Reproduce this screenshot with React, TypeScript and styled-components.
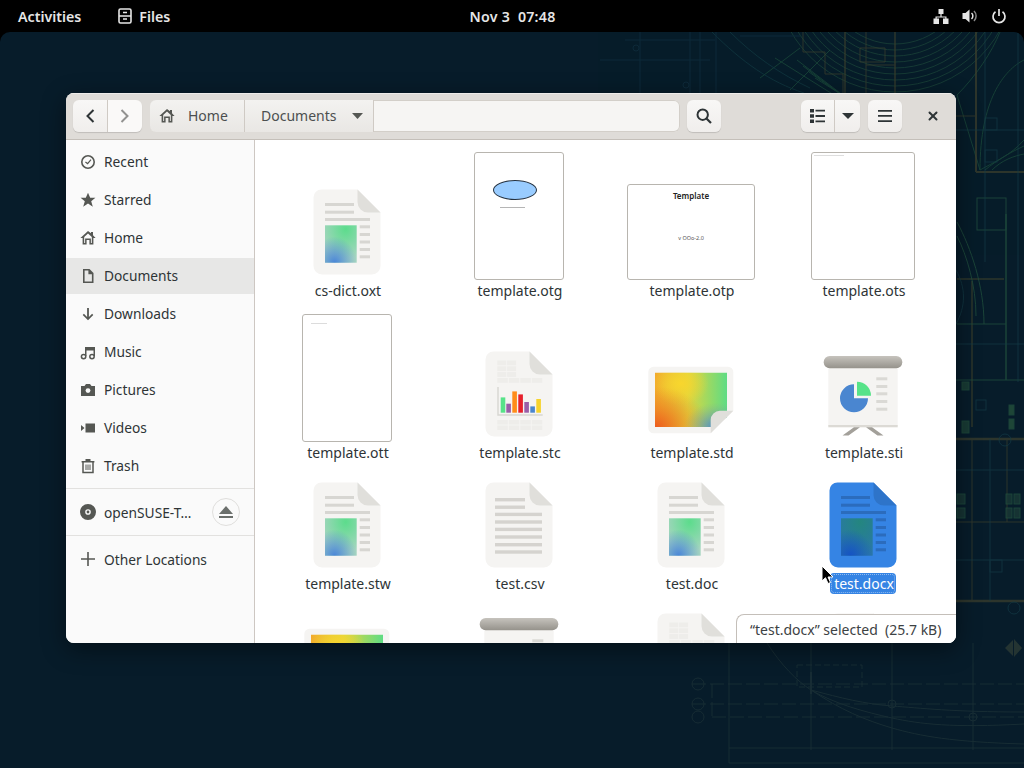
import React from 'react';
import styled, { createGlobalStyle } from 'styled-components';
import { X } from 'lucide-react';

const GlobalStyle = createGlobalStyle`
  html, body {
    margin: 0;
    padding: 0;
    background: #000;
    overflow: hidden;
  }
  * { box-sizing: border-box; }
`;

const FONT = `"Noto Sans", "Open Sans", sans-serif`;

const Screen = styled.div`
  width: 1024px;
  height: 768px;
  display: flex;
  flex-direction: column;
  background: #000;
  font-family: ${FONT};
  overflow: hidden;
`;

const TopBar = styled.div`
  height: 32px;
  flex: none;
  display: grid;
  grid-template-columns: 1fr auto 1fr;
  align-items: center;
  padding: 0 17px 0 18px;
  color: #e6e6e6;
  font-size: 14.2px;
  font-weight: 600;
`;

const BarLeft = styled.div`
  display: flex;
  align-items: center;
  gap: 37px;
`;

const AppName = styled.div`
  display: flex;
  align-items: center;
  gap: 7px;
`;

const Clock = styled.span`
  white-space: pre;
  letter-spacing: 0.25px;
`;

const BarRight = styled.div`
  display: flex;
  justify-content: flex-end;
  align-items: center;
  gap: 13px;
`;

const Desktop = styled.div`
  position: relative;
  flex: 1;
  background: #071c2a;
  border-radius: 10px 10px 0 0;
  overflow: hidden;
`;

const Blueprint = styled.svg`
  position: absolute;
  left: 0;
  top: 0;
  opacity: 0.68;
`;

const Defs = styled.svg`
  position: absolute;
`;

const Window = styled.div`
  position: absolute;
  left: 66px;
  top: 61px;
  width: 890px;
  height: 550px;
  border-radius: 8px;
  overflow: hidden;
  background: #fff;
  display: flex;
  flex-direction: column;
  box-shadow: 0 6px 24px rgba(0, 0, 0, 0.45);
`;

const HeaderBar = styled.div`
  height: 47px;
  flex: none;
  display: flex;
  align-items: center;
  padding: 0 6px 1px 7px;
  background: #dfdcd8;
  border-bottom: 1px solid #c4bfb9;
  border-top: 1px solid #eeecea;
`;

const ButtonGroup = styled.div`
  display: flex;
  height: 32px;
  border-radius: 6px;
  overflow: hidden;
  box-shadow: 0 1px 1px rgba(0, 0, 0, 0.14);
`;

const ToolButton = styled.div<{ $width: number; $divider?: boolean; $dim?: boolean }>`
  width: ${(p) => p.$width}px;
  height: 32px;
  display: flex;
  align-items: center;
  justify-content: center;
  background: ${(p) => (p.$dim ? '#faf9f8' : 'linear-gradient(#f8f7f6, #f0eeec)')};
  color: ${(p) => (p.$dim ? '#929290' : '#2e3436')};
  border-right: ${(p) => (p.$divider ? '1px solid #cfcac4' : 'none')};
`;

const PathBar = styled.div`
  margin-left: 8px;
  width: 530px;
  height: 32px;
  display: flex;
  border-radius: 6px;
  overflow: hidden;
  background: #f6f5f3;
  box-shadow: 0 0 0 1px #d3cfc9 inset;
`;

const Crumb = styled.div<{ $width: number; $inset: number }>`
  width: ${(p) => p.$width}px;
  display: flex;
  align-items: center;
  padding-left: ${(p) => p.$inset}px;
  gap: 13px;
  color: #4c4f50;
  font-size: 14px;
  background: linear-gradient(#f3f2f0, #e9e7e4);
  border-right: 1px solid #cfcac4;
`;

const CrumbLabel = styled.span<{ $grow?: boolean }>`
  padding-bottom: 1px;
  flex: ${(p) => (p.$grow ? 1 : 'none')};
`;

const Caret = styled.svg<{ $inset?: number }>`
  flex: none;
  margin-right: ${(p) => p.$inset ?? 0}px;
`;

const SearchSlot = styled.div`
  margin-left: 7px;
`;

const HeaderRight = styled.div`
  margin-left: auto;
  display: flex;
  align-items: center;
  gap: 8px;
`;

const CloseButton = styled.div`
  width: 34px;
  height: 32px;
  margin-left: 6px;
  display: flex;
  align-items: center;
  justify-content: center;
  color: #2e3436;
`;

const Body = styled.div`
  flex: 1;
  min-height: 0;
  display: flex;
`;

const Sidebar = styled.div`
  width: 189px;
  flex: none;
  padding-top: 4px;
  background: #fafafa;
  border-right: 1px solid #cdc7c2;
  color: #2e3436;
  font-size: 13.75px;
`;

const PlaceRow = styled.div<{ $active?: boolean }>`
  height: 36px;
  margin-bottom: 2px;
  display: flex;
  align-items: center;
  padding-left: 14px;
  gap: 8px;
  background: ${(p) => (p.$active ? '#e7e7e6' : 'transparent')};
`;

const PlaceLabel = styled.span`
  padding-bottom: 2px;
`;

const PlaceIcon = styled.svg`
  width: 16px;
  height: 16px;
  flex: none;
  color: #555753;
`;

const Separator = styled.div<{ $above: number; $below: number }>`
  height: 1px;
  background: #e2e1df;
  margin: ${(p) => p.$above}px 0 ${(p) => p.$below}px;
`;

const DeviceRow = styled(PlaceRow)`
  margin-bottom: 0;
  padding-bottom: 2px;
  position: relative;
`;

const EjectButton = styled.div`
  position: absolute;
  right: 14px;
  top: 3px;
  width: 28px;
  height: 28px;
  border-radius: 50%;
  border: 1px solid #dfdedc;
  display: flex;
  align-items: center;
  justify-content: center;
`;

const Content = styled.div`
  position: relative;
  flex: 1;
  overflow: hidden;
  background: #fff;
`;

const FileGrid = styled.div`
  display: grid;
  grid-template-columns: repeat(4, 172px);
  row-gap: 13px;
  padding: 12px 0 0 6px;
  align-items: end;
`;

const FileItem = styled.div`
  display: flex;
  flex-direction: column;
  align-items: center;
`;

const IconCell = styled.div<{ $height: number }>`
  height: ${(p) => p.$height}px;
  display: flex;
  align-items: flex-end;
  justify-content: center;
`;

const FileLabel = styled.div<{ $selected?: boolean }>`
  height: 21px;
  line-height: 22px;
  padding: 0 2px 0 4px;
  font-size: 14px;
  color: ${(p) => (p.$selected ? '#fff' : '#2e3436')};
  background: ${(p) => (p.$selected ? '#3584e4' : 'transparent')};
  border-radius: 4px;
  outline: ${(p) => (p.$selected ? '1px dotted rgba(255,255,255,0.45)' : 'none')};
  outline-offset: -2px;
`;

const Thumb = styled.div<{ $w: number; $h?: number }>`
  position: relative;
  width: ${(p) => p.$w}px;
  height: ${(p) => p.$h ?? 128}px;
  background: #fff;
  border: 1px solid #b8b5af;
  border-radius: 3px;
  overflow: hidden;
`;

const Oval = styled.div`
  position: absolute;
  left: 18px;
  top: 27px;
  width: 44px;
  height: 20px;
  border-radius: 50%;
  background: #99ccff;
  border: 1px solid #26323f;
`;

const Tiny = styled.div<{ $left: number; $top: number; $width: number; $shade: string }>`
  position: absolute;
  left: ${(p) => p.$left}px;
  top: ${(p) => p.$top}px;
  width: ${(p) => p.$width}px;
  height: 1px;
  background: ${(p) => p.$shade};
`;

const ThumbTitle = styled.div`
  position: absolute;
  left: 0;
  right: 0;
  top: 5px;
  text-align: center;
  font-size: 8px;
  line-height: 11px;
  font-weight: 600;
  color: #222;
`;

const ThumbVersion = styled.div`
  position: absolute;
  left: 0;
  right: 0;
  top: 50px;
  text-align: center;
  font-size: 5.5px;
  line-height: 7px;
  color: #555;
`;

const StatusPill = styled.div`
  position: absolute;
  right: 0;
  bottom: 0;
  width: 220px;
  height: 29px;
  padding-left: 13px;
  display: flex;
  align-items: center;
  background: #fff;
  border: 1px solid #c4bfb9;
  border-width: 1px 0 0 1px;
  border-radius: 8px 0 0 0;
  color: #3d4244;
  font-size: 14px;
  white-space: pre;
`;

const Pointer = styled.svg`
  position: absolute;
  left: 821px;
  top: 533px;
`;

// Sidebar glyphs, drawn to the 16px grid of the Adwaita symbolic set
const ICONS: Record<string, React.ReactNode> = {
  recent: (
    <>
      <circle cx="8" cy="8" r="6.2" fill="none" stroke="currentColor" strokeWidth="1.6" />
      <path d="M5.4 8 7.6 9.6 11 5.6" fill="none" stroke="currentColor" strokeWidth="1.2" />
    </>
  ),
  starred: <path d="M8 .8l2.2 5h5.2l-4.2 3.4 1.6 5.5L8 11.6l-4.8 3.1 1.6-5.5L.6 5.8h5.2z" fill="currentColor" />,
  home: <path d="M8 1 0.4 8h2.2v6.5h4V10h2.8v4.5h4V8h2.2L13 5.2V2h-2v1.3zM8 3.6l3.8 3.5v5.8h-.9V8.5H5.1v4.4h-.9V7.1z" fill="currentColor" fillRule="evenodd" />,
  documents: <path d="M3 1h6.5L13.5 5v10H3zM4.6 2.6v10.8h7.3V6.2H8.4V2.6z" fill="currentColor" fillRule="evenodd" />,
  downloads: <path d="M7.1 2h1.8v9l3.2-3.2 1.2 1.2L8 14.3 2.7 9l1.2-1.2L7.1 11z" fill="currentColor" />,
  music: (
    <>
      <path d="M5 3h10v9h-1.5V6.5h-7V12H5z" fill="currentColor" />
      <circle cx="3.6" cy="12.6" r="2.2" fill="none" stroke="currentColor" strokeWidth="1.5" />
      <circle cx="12" cy="12.6" r="2.2" fill="none" stroke="currentColor" strokeWidth="1.5" />
    </>
  ),
  pictures: (
    <>
      <path d="M1 4h3.5L6 2h4l1.5 2H15v10H1z" fill="currentColor" />
      <circle cx="8" cy="8.6" r="2.4" fill="#fafafa" />
    </>
  ),
  videos: <path d="M5.5 3.5h9.5v9H5.5zM1 5l3.5 3L1 11z" fill="currentColor" />,
  trash: (
    <>
      <path d="M1.6 3h12.8v1.5H1.6zM5.5 1h5v2h-5z" fill="currentColor" />
      <path d="M3 4v10.4h10V4" fill="none" stroke="currentColor" strokeWidth="1.5" />
      <path d="M6 6.5v5.5M8 6.5v5.5M10 6.5v5.5" stroke="currentColor" strokeWidth="1" />
    </>
  ),
  disc: (
    <>
      <path d="M8 0a8 8 0 1 0 0 16A8 8 0 0 0 8 0zm0 5.200a2.800 2.800 0 1 1 0 5.600 2.800 2.800 0 0 1 0-5.600z" fill="currentColor" fillRule="evenodd" />
      <circle cx="8" cy="8" r="1.4" fill="currentColor" />
    </>
  ),
  plus: <path d="M7.2 1h1.600v6.200H15v1.600H8.800V15H7.200V8.800H1V7.200h6.200z" fill="currentColor" />,
};

const Glyph = ({ name }: { name: string }) => (
  <PlaceIcon viewBox="0 0 16 16">{ICONS[name]}</PlaceIcon>
);

const SHEET = 'M22.500 5.500h36L81.500 28.500V82a8.500 8.500 0 0 1-8.500 8.500H23a8.500 8.500 0 0 1-8.500-8.500V13.500a8 8 0 0 1 8-8z';
const FOLD = 'M58.500 5.500 81.500 28.500H69a10.500 10.500 0 0 1-10.500-10.500z';

const Gradients = () => (
  <Defs width="0" height="0">
    <defs>
      <radialGradient id="tealA" cx="0.65" cy="0.1" r="0.8">
        <stop offset="0" stopColor="#5cdc8c" />
        <stop offset="1" stopColor="#a6d5c0" />
      </radialGradient>
      <radialGradient id="blueA" cx="0.3" cy="1" r="0.7">
        <stop offset="0" stopColor="#4a86d8" />
        <stop offset="1" stopColor="#4a86d8" stopOpacity="0" />
      </radialGradient>
      <radialGradient id="tealB" cx="0.6" cy="0.1" r="0.9">
        <stop offset="0" stopColor="#24867f" />
        <stop offset="1" stopColor="#2a77a8" />
      </radialGradient>
      <radialGradient id="blueB" cx="0.3" cy="1" r="0.7">
        <stop offset="0" stopColor="#1553c4" />
        <stop offset="1" stopColor="#1553c4" stopOpacity="0" />
      </radialGradient>
      <linearGradient id="roller" x1="0" y1="0" x2="0" y2="1">
        <stop offset="0" stopColor="#c6c3bd" />
        <stop offset="1" stopColor="#95928b" />
      </linearGradient>
      <linearGradient id="drawBase" x1="0" y1="0" x2="1" y2="0">
        <stop offset="0" stopColor="#f2a82c" />
        <stop offset="0.45" stopColor="#e0d63e" />
        <stop offset="1" stopColor="#5edc84" />
      </linearGradient>
      <radialGradient id="drawYellow" cx="0.35" cy="0.2" r="0.4">
        <stop offset="0" stopColor="#f8d62d" />
        <stop offset="1" stopColor="#f8d62d" stopOpacity="0" />
      </radialGradient>
      <radialGradient id="drawOrange" cx="0" cy="1" r="0.75">
        <stop offset="0" stopColor="#ed5b1e" />
        <stop offset="1" stopColor="#ed8a1e" stopOpacity="0" />
      </radialGradient>
      <radialGradient id="drawBlue" cx="0.85" cy="1" r="0.45">
        <stop offset="0" stopColor="#4a86d8" />
        <stop offset="1" stopColor="#8aa890" stopOpacity="0" />
      </radialGradient>
    </defs>
  </Defs>
);

const WriterIcon = ({ selected }: { selected?: boolean }) => {
  const sheet = selected ? '#3584e4' : '#f5f4f2';
  const fold = selected ? '#2e74c9' : '#e0dfdb';
  const line = selected ? '#2b6cbd' : '#d7d6d2';
  return (
    <svg width="96" height="96" viewBox="0 0 96 96">
      <path d={SHEET} fill={sheet} />
      <path d={FOLD} fill={fold} />
      <rect x="26" y="19" width="29" height="3" fill={line} />
      <rect x="26" y="26.700" width="29" height="3" fill={line} />
      <rect x="26" y="34" width="45" height="3" fill={line} />
      {[41.3, 49, 56.5, 64, 71.3].map((y) => (
        <rect key={y} x="60.700" y={y} width="10.300" height="3" fill={line} />
      ))}
      <rect x="26" y="41.300" width="31.700" height="37.400" fill={selected ? 'url(#tealB)' : 'url(#tealA)'} />
      <rect x="26" y="41.300" width="31.700" height="37.400" fill={selected ? 'url(#blueB)' : 'url(#blueA)'} />
    </svg>
  );
};

const TextIcon = () => (
  <svg width="96" height="96" viewBox="0 0 96 96">
    <path d={SHEET} fill="#f5f4f2" />
    <path d={FOLD} fill="#e0dfdb" />
    {[
      [21, 30],
      [28.5, 30],
      [35.7, 47],
      [43.3, 47],
      [50.7, 47],
      [58.3, 47],
      [66, 47],
      [73.3, 47],
    ].map(([y, w]) => (
      <rect key={y} x="24" y={y} width={w} height="3.400" fill="#d5d3cf" />
    ))}
  </svg>
);

const CalcIcon = () => {
  const bars: [number, number, string][] = [
    [29.7, 15.3, '#57e389'],
    [35.3, 9, '#9a5ea8'],
    [41.3, 21.3, '#ff8c1a'],
    [47.3, 18.3, '#e6202c'],
    [53.3, 10.7, '#9a5ea8'],
    [59.3, 6.3, '#4a86cf'],
    [65.3, 13.7, '#f6d32d'],
  ];
  const cells = [];
  for (let r = 0; r < 3; r++) {
    for (let c = 0; c < 2; c++) {
      cells.push(<rect key={`${r}-${c}`} x={26.3 + c * 9.800} y={14.500 + r * 5.800} width="9" height="4.800" fill="#eeedea" />);
    }
  }
  return (
    <svg width="96" height="96" viewBox="0 0 96 96">
      <path d={SHEET} fill="#f5f4f2" />
      <path d={FOLD} fill="#e0dfdb" />
      {cells}
      {[26.3, 37.800, 49.300, 60.800].map((x) => (
        <React.Fragment key={x}>
          <rect x={x} y="32" width="10.500" height="4.800" fill="#eeedea" />
          <rect x={x} y="74" width="10.500" height="4.500" fill="#eeedea" />
          <rect x={x} y="79.500" width="10.500" height="4.500" fill="#eeedea" />
        </React.Fragment>
      ))}
      <path d="M27 41v28h44.700" fill="none" stroke="#d7d6d2" strokeWidth="1.400" />
      {bars.map(([x, h, c]) => (
        <rect key={x} x={x} y={66.700 - h} width="4.600" height={h} fill={c} />
      ))}
    </svg>
  );
};

const DRAW_IMAGE = 'M12 26.700h72V71L68 81H12z';

const DrawIcon = () => (
  <svg width="96" height="96" viewBox="0 0 96 96">
    <path d="M5.300 26a5.300 5.300 0 0 1 5.300-5.300h74.400a5.300 5.300 0 0 1 5.300 5.300v38.700L67.700 87.300H10.600a5.300 5.300 0 0 1-5.300-5.300z" fill="#f5f4f2" />
    <path d={DRAW_IMAGE} fill="url(#drawBase)" />
    <path d={DRAW_IMAGE} fill="url(#drawYellow)" />
    <path d={DRAW_IMAGE} fill="url(#drawOrange)" />
    <path d={DRAW_IMAGE} fill="url(#drawBlue)" />
    <path d="M90.300 64.700 67.700 87.300V74a9.300 9.300 0 0 1 9.300-9.300z" fill="#e0dfdb" />
  </svg>
);

const ImpressIcon = () => (
  <svg width="96" height="96" viewBox="0 0 96 96">
    <path d="M13.300 21h69.400v59H13.300z" fill="#f5f4f2" />
    <rect x="13.300" y="79" width="69.400" height="2.300" fill="#dcdad5" />
    <rect x="8.700" y="10" width="78.600" height="12.300" rx="6" fill="url(#roller)" />
    <path d="M39 81.300h6L33.500 89.500H27.500zM51 81.300h6L68.500 89.500H62.500z" fill="#a3a09a" />
    <path d="M39 52.300V38.300A14 14 0 1 0 53 52.300z" fill="#4a86d0" />
    <path d="M42 49.700V35.700A14 14 0 0 1 56 49.700z" fill="#57e389" />
    {[31.3, 39, 46.3, 54, 61.7].map((y) => (
      <rect key={y} x="61.300" y={y} width="11" height="3" fill="#dad9d5" />
    ))}
  </svg>
);

type FileEntry = { name?: string; icon: React.ReactNode; selected?: boolean };

const ROWS: { height: number; files: FileEntry[] }[] = [
  {
    height: 128,
    files: [
      { name: 'cs-dict.oxt', icon: <WriterIcon /> },
      {
        name: 'template.otg',
        icon: (
          <Thumb $w={90}>
            <Oval />
            <Tiny $left={25} $top={54} $width={25} $shade="#b5b5b5" />
          </Thumb>
        ),
      },
      {
        name: 'template.otp',
        icon: (
          <Thumb $w={128} $h={96}>
            <ThumbTitle>Template</ThumbTitle>
            <ThumbVersion>v OOo-2.0</ThumbVersion>
          </Thumb>
        ),
      },
      {
        name: 'template.ots',
        icon: (
          <Thumb $w={104}>
            <Tiny $left={2} $top={2} $width={30} $shade="#dedede" />
          </Thumb>
        ),
      },
    ],
  },
  {
    height: 128,
    files: [
      {
        name: 'template.ott',
        icon: (
          <Thumb $w={90}>
            <Tiny $left={8} $top={8} $width={16} $shade="#dcdcdc" />
          </Thumb>
        ),
      },
      { name: 'template.stc', icon: <CalcIcon /> },
      { name: 'template.std', icon: <DrawIcon /> },
      { name: 'template.sti', icon: <ImpressIcon /> },
    ],
  },
  {
    height: 97,
    files: [
      { name: 'template.stw', icon: <WriterIcon /> },
      { name: 'test.csv', icon: <TextIcon /> },
      { name: 'test.doc', icon: <WriterIcon /> },
      { name: 'test.docx', icon: <WriterIcon selected />, selected: true },
    ],
  },
  // last row runs under the window edge, only the top of the icons shows
  {
    height: 97,
    files: [
      { icon: <DrawIcon /> },
      { icon: <ImpressIcon /> },
      { icon: <CalcIcon /> },
      { icon: <WriterIcon /> },
    ],
  },
];

const PLACES = [
  ['recent', 'Recent'],
  ['starred', 'Starred'],
  ['home', 'Home'],
  ['documents', 'Documents'],
  ['downloads', 'Downloads'],
  ['music', 'Music'],
  ['pictures', 'Pictures'],
  ['videos', 'Videos'],
  ['trash', 'Trash'],
];

const Wallpaper = () => (
  <Blueprint width="1024" height="736" viewBox="0 32 1024 736" fill="none">
    {/* concentric green arcs over the top right */}
    <g stroke="#2c6646" strokeWidth="1" opacity="0.6">
      {[52, 58, 64, 70, 76, 82, 88, 94, 100].map((r) => (
        <circle key={r} cx="895" cy="-28" r={r + 20} />
      ))}
    </g>
    <g stroke="#2f7a4c" strokeWidth="1" opacity="0.55">
      <path d="M775 58 842 100M797 60l43 33M803 66l36 27M809 72l30 21M815 78l24 15" />
      <path d="M790 90l40-40M760 78l40-30" />
      <path d="M1000 32c-8 20-24 44-43 63M1024 60c-20 10-44 40-44 110" />
      <path d="M957 95l23 75" />
      <path d="M980 170c14-8 30-14 44-30M985 170c12-10 26-18 39-24M992 170c10-10 22-14 32-16" />
    </g>
    <g stroke="#14434a" strokeWidth="1" opacity="0.8">
      <path d="M712 32c30 30 58 50 92 61M730 32c24 24 50 42 80 56" />
    </g>
    <g stroke="#534f2e" strokeWidth="1" opacity="0.75">
      <path d="M803 32v20h22v22h18v19" />
      <path d="M845 32v61M895 32v61" strokeWidth="1.500" />
      <path d="M866 32v61M866 65h29M860 48h25v14h-25z" />
      <path d="M976 32v140" strokeWidth="2" />
      <path d="M976 172h48" strokeWidth="2" />
      <path d="M957 279h47M972 281v146" strokeWidth="1.500" />
      <path d="M956 439h68" strokeWidth="2.500" />
      <path d="M972 439v162M1007 439v83M956 522h68" />
      <path d="M956 601h68" strokeWidth="2.500" />
      <path d="M956 116h20" />
    </g>
    <g stroke="#2c6646" strokeWidth="1" opacity="0.8">
      <path d="M1006 214v166" strokeWidth="1.500" />
      <path d="M957 222c14 26 27 64 27 102" />
      <path d="M957 236c10 20 19 50 19 80" />
      <path d="M956 380h68M957 324h49" />
      <rect x="977" y="198" width="29" height="32" />
      <rect x="962" y="382" width="7" height="8" fill="#28553f" />
      <rect x="962" y="421" width="7" height="12" fill="#28553f" />
      <rect x="1009" y="405" width="5" height="10" fill="#336a44" />
      <rect x="1009" y="419" width="5" height="10" fill="#336a44" />
      <rect x="957" y="494" width="8" height="10" fill="#24483c" />
      <rect x="957" y="508" width="8" height="10" fill="#24483c" />
      <rect x="1006" y="494" width="6" height="10" fill="#24483c" />
      <rect x="1014" y="494" width="6" height="10" fill="#24483c" />
      <rect x="1006" y="508" width="6" height="10" fill="#24483c" />
      <rect x="1014" y="508" width="6" height="10" fill="#24483c" />
    </g>
    <g stroke="#1a4a55" strokeWidth="1" opacity="0.7">
      <path d="M956 270c10 18 10 36 0 54" />
      <path d="M985 32v230M1018 32v350M956 130h68M956 344h68M956 470h68M956 560h68M990 439v162" />
      <rect x="985" y="118" width="12" height="12" />
      <rect x="985" y="150" width="12" height="12" />
      <rect x="990" y="560" width="12" height="12" />
      <rect x="976" y="400" width="10" height="10" />
      <circle cx="1005" cy="440" r="6" />
      <circle cx="1014" cy="608" r="6" />
    </g>
    <path d="M1005 648l8-8v16zM1014 639l8 9-8 9z" fill="#3d4a3a" opacity="0.8" />
    {/* faint plan under the window */}
    <g stroke="#2a4040" strokeWidth="1" opacity="0.7">
      <path d="M729 643v120M811 643v107M892 643v107M973 643v107" />
      <path d="M692 684h332M692 704h332M712 717h312M712 684v33" strokeDasharray="14 4" />
      <path d="M729 748h295M729 763h295" />
      <path d="M767 643c14 22 30 38 44 47 24 14 54 22 81 28 28 6 60 10 132 6" />
      <path d="M811 690c30 20 54 30 81 38 28 8 60 14 132 16" />
      <path d="M811 690c30 8 54 14 81 16 28 2 60 6 132 6" />
      <circle cx="698" cy="684" r="6" />
      <circle cx="698" cy="704" r="6" />
      <circle cx="698" cy="717" r="6" />
      <circle cx="892" cy="704" r="4" />
      <circle cx="973" cy="717" r="4" />
      <rect x="797" y="665" width="65" height="22" strokeDasharray="6 3" />
      <path d="M811 672v22" strokeWidth="2" />
    </g>
    <g stroke="#113040" strokeWidth="1">
      <path d="M640 32v61M690 32v61M700 32v61M716 32v61M600 60h110M625 40h90M740 36h60" />
      <circle cx="636" cy="48" r="3" />
      <circle cx="686" cy="85" r="3" />
    </g>
  </Blueprint>
);

const App: React.FC = () => (
  <>
    <GlobalStyle />
    <Gradients />
    <Screen>
      <TopBar>
        <BarLeft>
          <span>Activities</span>
          <AppName>
            <svg width="14" height="16" viewBox="0 0 14 16" fill="none">
              <rect x="1" y="1" width="12" height="14" rx="1.500" stroke="#e6e6e6" strokeWidth="1.600" />
              <path d="M1 8h12M5 4.500h4M5 11h4" stroke="#e6e6e6" strokeWidth="1.400" />
            </svg>
            <span>Files</span>
          </AppName>
        </BarLeft>
        <Clock>Nov 3  07:48</Clock>
        <BarRight>
          <svg width="16" height="16" viewBox="0 0 16 16" fill="#e6e6e6">
            <path d="M5.500 1h5v5h-5zM7.400 6h1.200v2.400H13.500v2.600h-1.200V9.600H3.700V11H2.500V8.400h4.900z" />
            <path d="M.5 10.500h5.500V16H.5zM10 10.500h5.500V16H10z" />
          </svg>
          <svg width="16" height="16" viewBox="0 0 16 16" fill="none">
            <path d="M0.500 5h3L7.500 1.500v13l-4-3.500h-3z" fill="#e6e6e6" />
            <path d="M9.500 5a4 4 0 0 1 0 6" stroke="#e6e6e6" strokeWidth="1.500" />
            <path d="M12 3a7 7 0 0 1 0 10" stroke="#8a8a8a" strokeWidth="1.500" />
          </svg>
          <svg width="16" height="16" viewBox="0 0 16 16" fill="none" stroke="#e6e6e6" strokeWidth="1.700">
            <path d="M8 1v7" />
            <path d="M4.500 3.800a6 6 0 1 0 7 0" />
          </svg>
        </BarRight>
      </TopBar>
      <Desktop>
        <Wallpaper />
        <Window>
          <HeaderBar>
            <ButtonGroup>
              <ToolButton $width={35} $divider>
                <svg width="10" height="14" viewBox="0 0 10 14" fill="none" stroke="currentColor" strokeWidth="2">
                  <path d="M8.500 1 2.500 7l6 6" />
                </svg>
              </ToolButton>
              <ToolButton $width={34} $dim>
                <svg width="10" height="14" viewBox="0 0 10 14" fill="none" stroke="currentColor" strokeWidth="2">
                  <path d="M1.500 1l6 6-6 6" />
                </svg>
              </ToolButton>
            </ButtonGroup>
            <PathBar>
              <Crumb $width={95} $inset={9}>
                <Glyph name="home" />
                <CrumbLabel>Home</CrumbLabel>
              </Crumb>
              <Crumb $width={129} $inset={16}>
                <CrumbLabel $grow>Documents</CrumbLabel>
                <Caret width="11" height="6" viewBox="0 0 11 6" $inset={10}>
                  <path d="M0 0h11L5.500 6z" fill="#555753" />
                </Caret>
              </Crumb>
            </PathBar>
            <SearchSlot>
              <ButtonGroup>
                <ToolButton $width={34}>
                  <svg width="16" height="16" viewBox="0 0 16 16" fill="none" stroke="currentColor" strokeWidth="2">
                    <circle cx="6.700" cy="6.700" r="5.200" />
                    <path d="M10.500 10.500 15 15" strokeWidth="2.200" />
                  </svg>
                </ToolButton>
              </ButtonGroup>
            </SearchSlot>
            <HeaderRight>
              <ButtonGroup>
                <ToolButton $width={34} $divider>
                  <svg width="15" height="14" viewBox="0 0 15 14" fill="currentColor">
                    <path d="M0 0h4v3.500H0zM0 5.300h4v3.500H0zM0 10.500h4V14H0zM5.500 .8H15v1.800H5.500zM5.500 6.100H15v1.800H5.500zM5.500 11.400H15v1.800H5.500z" />
                  </svg>
                </ToolButton>
                <ToolButton $width={25}>
                  <Caret width="12" height="6" viewBox="0 0 12 6">
                    <path d="M0 0h12L6 6z" fill="#2e3436" />
                  </Caret>
                </ToolButton>
              </ButtonGroup>
              <ButtonGroup>
                <ToolButton $width={34}>
                  <svg width="14" height="12" viewBox="0 0 14 12" fill="currentColor">
                    <path d="M0 0h14v1.700H0zM0 5.100h14v1.700H0zM0 10.300h14V12H0z" />
                  </svg>
                </ToolButton>
              </ButtonGroup>
              <CloseButton>
                <X size={14} strokeWidth={3.4} />
              </CloseButton>
            </HeaderRight>
          </HeaderBar>
          <Body>
            <Sidebar>
              {PLACES.map(([icon, label]) => (
                <PlaceRow key={label} $active={label === 'Documents'}>
                  <Glyph name={icon} />
                  <PlaceLabel>{label}</PlaceLabel>
                </PlaceRow>
              ))}
              <Separator $above={4} $below={6} />
              <DeviceRow>
                <Glyph name="disc" />
                <span>openSUSE-T…</span>
                <EjectButton>
                  <svg width="16" height="14" viewBox="0 0 16 14" fill="#6b6f6c">
                    <path d="M8 1l7 8H1zM1 11h14v2H1z" />
                  </svg>
                </EjectButton>
              </DeviceRow>
              <Separator $above={4} $below={6} />
              <DeviceRow>
                <Glyph name="plus" />
                <span>Other Locations</span>
              </DeviceRow>
            </Sidebar>
            <Content>
              <FileGrid>
                {ROWS.map((row, r) =>
                  row.files.map((file, c) => (
                    <FileItem key={`${r}-${c}`}>
                      <IconCell $height={row.height}>{file.icon}</IconCell>
                      {file.name && <FileLabel $selected={file.selected}>{file.name}</FileLabel>}
                    </FileItem>
                  )),
                )}
              </FileGrid>
              <StatusPill>{'“test.docx” selected  (25.7 kB)'}</StatusPill>
            </Content>
          </Body>
        </Window>
        <Pointer width="14" height="20" viewBox="0 0 14 20">
          <path d="M1 1v15l3.500-3.300 2.500 5.800 2.500-1-2.500-5.500H12z" fill="#000" stroke="#fff" strokeWidth="1" />
        </Pointer>
      </Desktop>
    </Screen>
  </>
);

export default App;
